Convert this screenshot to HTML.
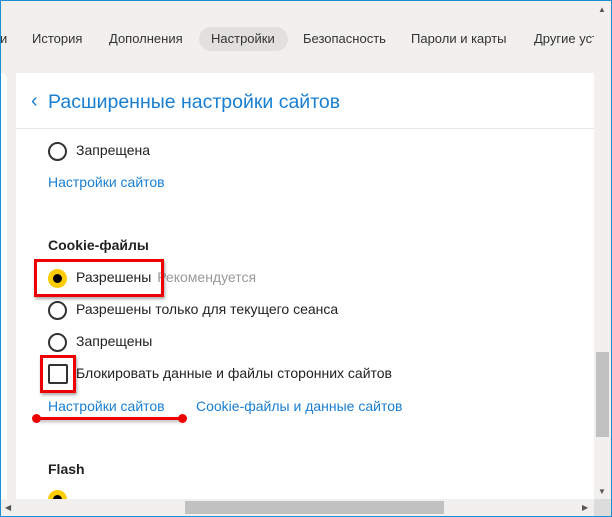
<!DOCTYPE html>
<html><head><meta charset="utf-8"><style>
*{margin:0;padding:0;box-sizing:border-box}
body{width:612px;height:517px;overflow:hidden;background:#f1f0ef;font-family:"Segoe UI","Liberation Sans","DejaVu Sans",sans-serif;position:relative;color:#222}
.frame{position:absolute;left:0;top:0;width:612px;height:517px;border:1px solid #1a8fd8;z-index:50;pointer-events:none}
.t{position:absolute;font-size:13px;color:#333;top:31px}
.pill{position:absolute;left:199px;top:27px;width:89px;height:24px;border-radius:12px;background:#e1e0df}
.lp{position:absolute;left:1px;top:73px;width:6px;height:430px;background:#fff;border-radius:0 6px 0 0}
.card{position:absolute;left:16px;top:73px;width:578px;height:426px;background:#fff}
.title{position:absolute;left:48px;top:91px;font-size:19.5px;color:#1a7fd0}
.chev{position:absolute;left:31px;top:90px;font-size:20px;color:#1a7fd0}
.sep{position:absolute;left:16px;top:128px;width:578px;height:1px;background:#e6e6e6}
.txt{position:absolute;font-size:14px;color:#222}
.link{position:absolute;font-size:14px;color:#1a7fd0}
.rad{position:absolute;width:19px;height:19px;border:2px solid #333;border-radius:50%;background:#fff}
.rsel{position:absolute;width:19px;height:19px;border-radius:50%;background:#fc0}
.rsel:after{content:"";position:absolute;left:5px;top:5px;width:9px;height:9px;border-radius:50%;background:#000}
.h{position:absolute;font-size:14px;font-weight:bold;color:#222}
.red{position:absolute;border:3px solid #e00;box-shadow:1px 2px 3px rgba(0,0,0,.35)}
.vs{position:absolute;left:594px;top:0;width:17px;height:499px;background:#f1f0ef}
.hs{position:absolute;left:1px;top:499px;width:593px;height:17px;background:#f1f0ef}
</style></head><body>
<div class="t" style="left:0">и</div>
<div class="t" style="left:32px">История</div>
<div class="t" style="left:109px">Дополнения</div>
<div class="pill"></div>
<div class="t" style="left:211px">Настройки</div>
<div class="t" style="left:303px">Безопасность</div>
<div class="t" style="left:411px">Пароли и карты</div>
<div class="t" style="left:534px;white-space:nowrap;width:60px;overflow:hidden">Другие уст</div>
<div class="lp"></div>
<div class="card"></div>
<div class="chev">‹</div>
<div class="title">Расширенные настройки сайтов</div>
<div class="sep"></div>

<div class="rad" style="left:48px;top:142px"></div>
<div class="txt" style="left:76px;top:142px">Запрещена</div>
<div class="link" style="left:48px;top:174px">Настройки сайтов</div>
<div class="h" style="left:48px;top:237px">Cookie-файлы</div>
<div class="rsel" style="left:48px;top:269px"></div>
<div class="txt" style="left:76px;top:269px">Разрешены <span style="color:#999;margin-left:2px">Рекомендуется</span></div>
<div class="rad" style="left:48px;top:301px"></div>
<div class="txt" style="left:76px;top:301px">Разрешены только для текущего сеанса</div>
<div class="rad" style="left:48px;top:333px"></div>
<div class="txt" style="left:76px;top:333px">Запрещены</div>
<div style="position:absolute;left:48px;top:364px;width:20px;height:20px;border:2px solid #333;border-radius:2px"></div>
<div class="txt" style="left:76px;top:365px">Блокировать данные и файлы сторонних сайтов</div>
<div class="link" style="left:48px;top:398px">Настройки сайтов</div>
<div class="link" style="left:196px;top:398px">Cookie-файлы и данные сайтов</div>
<div class="h" style="left:48px;top:461px">Flash</div>
<div class="rsel" style="left:48px;top:490px"></div>

<div class="red" style="left:34px;top:259px;width:130px;height:38px"></div>
<div class="red" style="left:40px;top:355px;width:36px;height:38px"></div>
<div style="position:absolute;left:36px;top:417px;width:147px;height:3px;background:#e00;box-shadow:1px 2px 3px rgba(0,0,0,.3)"></div>
<div style="position:absolute;left:32px;top:414px;width:9px;height:9px;border-radius:50%;background:#e00"></div>
<div style="position:absolute;left:178px;top:414px;width:9px;height:9px;border-radius:50%;background:#e00"></div>

<div class="vs"></div>
<div style="position:absolute;left:598px;top:5px;font-size:8px;color:#555">▲</div>
<div style="position:absolute;left:596px;top:352px;width:13px;height:85px;background:#c1c1c1"></div>
<div style="position:absolute;left:598px;top:487px;font-size:8px;color:#555">▼</div>
<div class="hs"></div>
<div style="position:absolute;left:5px;top:503px;font-size:8px;color:#555">◀</div>
<div style="position:absolute;left:185px;top:501px;width:259px;height:13px;background:#c1c1c1"></div>
<div style="position:absolute;left:582px;top:503px;font-size:8px;color:#555">▶</div>
<div style="position:absolute;left:594px;top:499px;width:17px;height:17px;background:#dcdcdc"></div>
<div class="frame"></div>
</body></html>
